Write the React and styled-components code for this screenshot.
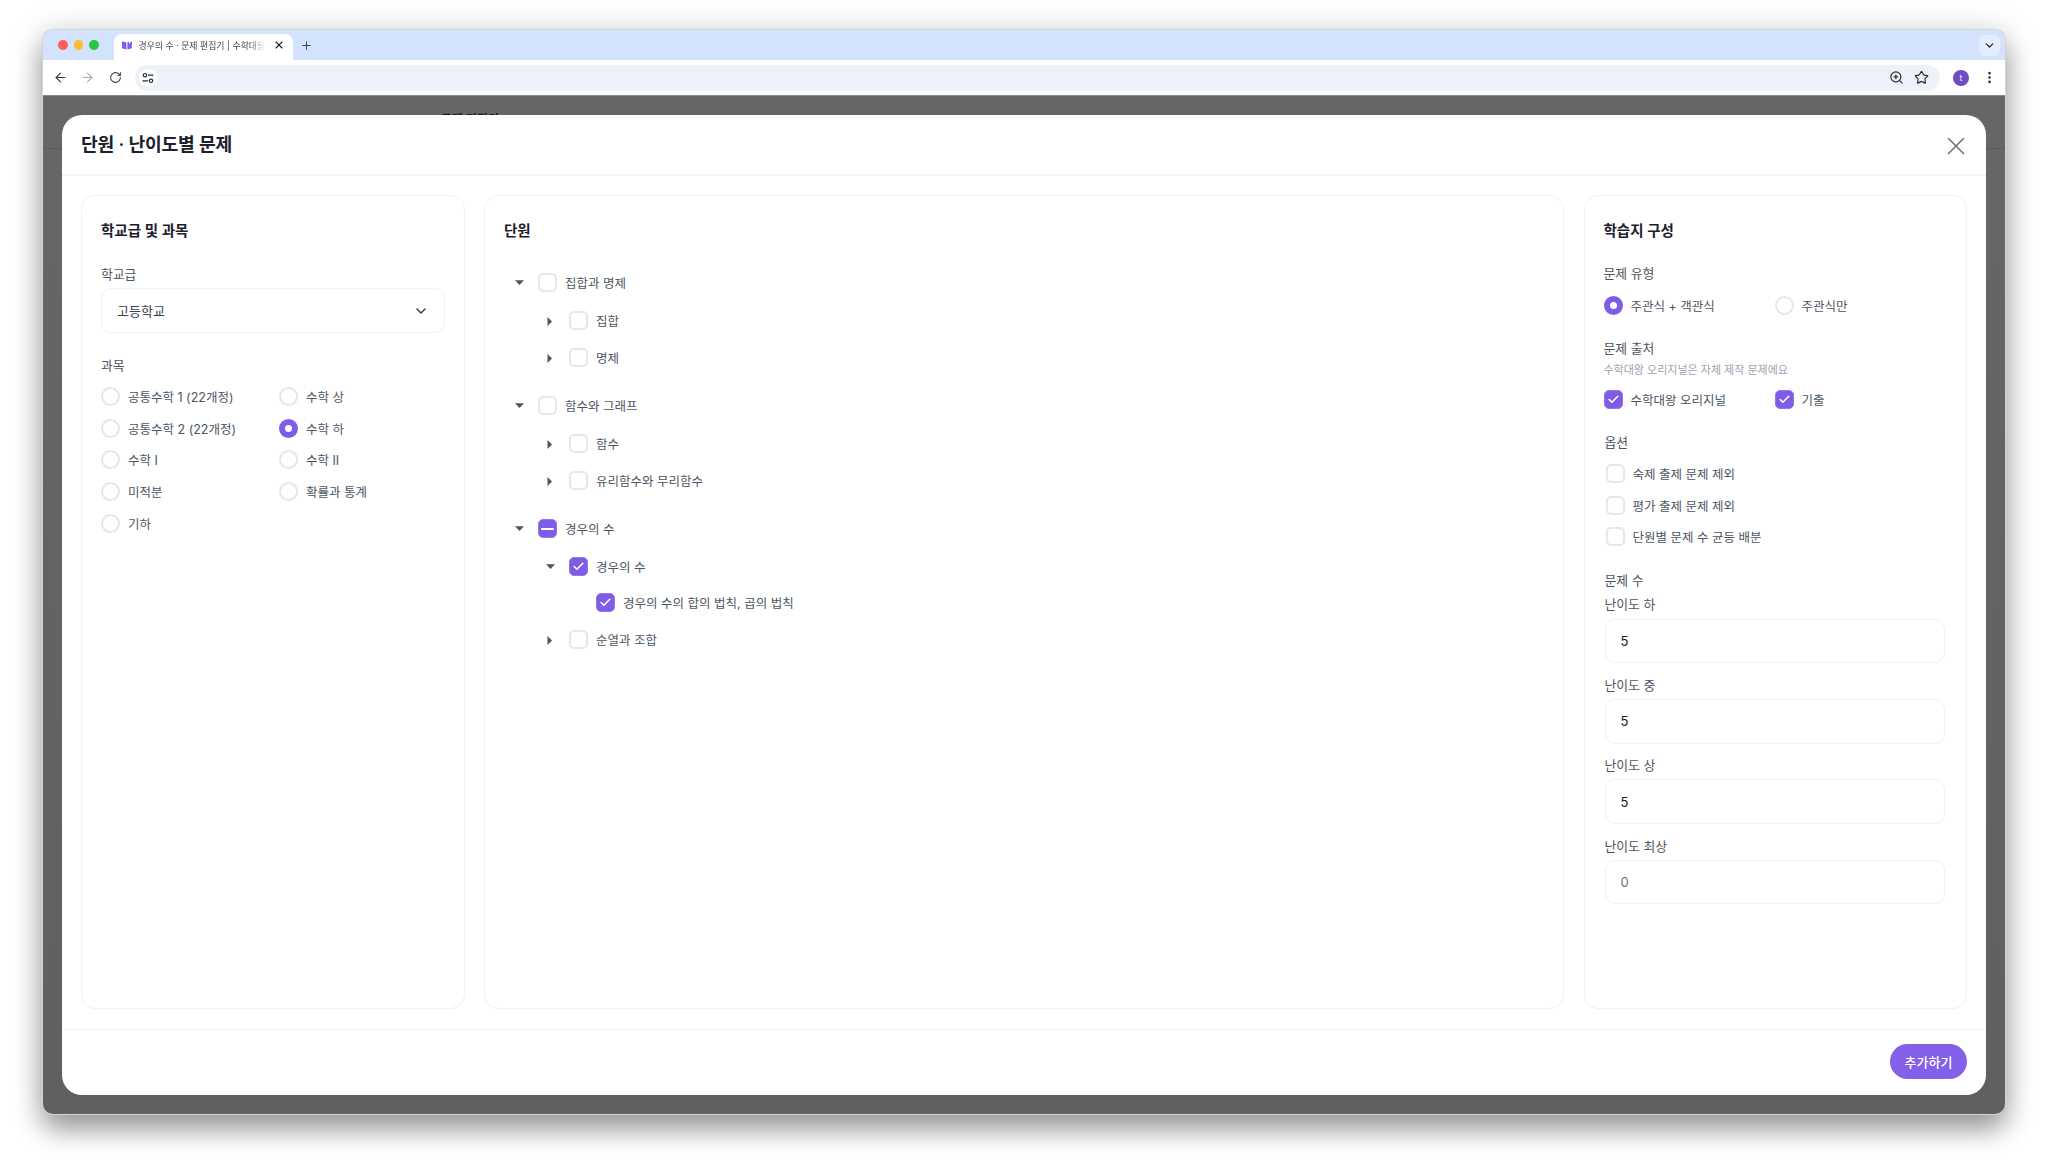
import React from 'react';
import styled, { createGlobalStyle } from 'styled-components';
import { ArrowLeft, ArrowRight, RotateCw, ZoomIn, Star, EllipsisVertical, ChevronDown, X, Plus, Check } from 'lucide-react';

const FONT = 'Inter, "Noto Sans CJK KR", "Noto Sans", sans-serif';
const PURPLE = '#7f5ce6';

const GlobalStyle = createGlobalStyle`
  html, body { margin: 0; padding: 0; background: #fff; }
  * { box-sizing: border-box; }
  body { font-family: ${FONT}; }
`;

const Page = styled.div`
  width: 2048px;
  height: 1171px;
  padding: 30px 43px 57px;
  background: #fff;
  overflow: hidden;
`;

// Browser window
const BrowserWindow = styled.div`
  height: 100%;
  display: flex;
  flex-direction: column;
  border-radius: 10px;
  overflow: hidden;
  box-shadow: 0 0 0 1px #d4d4d6, 0 16px 26px rgba(0, 0, 0, 0.32), 0 4px 34px rgba(0, 0, 0, 0.2);
`;

const TabStrip = styled.div`
  height: 30px;
  flex: none;
  display: flex;
  align-items: flex-end;
  background: #d3e3fd;
  padding-left: 15px;
  padding-right: 5px;
`;

const TrafficLights = styled.div`
  display: flex;
  gap: 6px;
  align-self: center;
  margin-right: 15px;
`;

const Light = styled.span`
  width: 9.5px;
  height: 9.5px;
  border-radius: 50%;
  background: ${props => props.color};
`;

const Tab = styled.div`
  width: 179px;
  height: 26px;
  display: flex;
  align-items: center;
  background: #fff;
  border-radius: 8px 8px 0 0;
  padding: 0 8px 4px;
  gap: 7px;
`;

const TabTitle = styled.span`
  flex: 1;
  overflow: hidden;
  white-space: nowrap;
  font-size: 8.9px;
  color: #45474a;
  -webkit-mask-image: linear-gradient(to right, #000 86%, transparent 100%);
  mask-image: linear-gradient(to right, #000 86%, transparent 100%);
`;

const NewTab = styled.div`
  align-self: center;
  margin-left: 7px;
  display: flex;
  color: #3c4043;
`;

const StripMenu = styled.div`
  margin-left: auto;
  align-self: center;
  width: 21px;
  height: 21px;
  border-radius: 6px;
  background: #e4edfc;
  display: flex;
  align-items: center;
  justify-content: center;
  color: #1f1f1f;
`;

const Toolbar = styled.div`
  height: 36px;
  flex: none;
  display: flex;
  align-items: center;
  background: #fff;
  padding: 0 8px 0 3.5px;
  border-bottom: 1px solid #8a8a8a;
`;

const NavButton = styled.div`
  width: 27.5px;
  display: flex;
  justify-content: center;
  color: ${props => (props.$dim ? '#a8aaad' : '#3c4043')};
`;

const Omnibox = styled.div`
  flex: 1;
  height: 26px;
  margin-left: 5.5px;
  display: flex;
  align-items: center;
  padding: 0 11px 0 4px;
  gap: 10.5px;
  border-radius: 13px;
  background: #edf2fa;
  color: #2b2d30;
`;

const SiteChip = styled.div`
  width: 18px;
  height: 18px;
  border-radius: 50%;
  background: #fff;
  display: flex;
  align-items: center;
  justify-content: center;
  margin-right: auto;
`;

const Avatar = styled.div`
  width: 16px;
  height: 16px;
  margin-left: 13px;
  border-radius: 50%;
  background: #6f4bc4;
  color: #e8e0ff;
  font-size: 9px;
  display: flex;
  align-items: center;
  justify-content: center;
`;

const MenuDots = styled.div`
  margin-left: 12px;
  width: 16px;
  display: flex;
  justify-content: center;
  color: #2b2d30;
`;

// Dimmed page + modal
const Overlay = styled.div`
  position: relative;
  flex: 1;
  min-height: 0;
  display: flex;
  padding: 19px;
  background: linear-gradient(#666, #606060);
`;

const PageRule = styled.div`
  position: absolute;
  left: 0;
  right: 0;
  top: 52px;
  height: 1px;
  background: #5a5a5a;
`;

// page title behind the backdrop, only its top edge shows above the modal
const PageHeading = styled.div`
  position: absolute;
  left: 398px;
  top: 14px;
  font-size: 12px;
  font-weight: 700;
  color: #1a1a1a;
  white-space: nowrap;
`;

const Modal = styled.div`
  position: relative;
  flex: 1;
  display: flex;
  flex-direction: column;
  background: #fff;
  border-radius: 20px;
  overflow: hidden;
`;

const ModalHeader = styled.div`
  height: 61px;
  flex: none;
  display: flex;
  align-items: center;
  justify-content: space-between;
  padding: 0 15px 3px 19px;
  border-bottom: 2px solid #f3f4f6;
`;

const ModalTitle = styled.h2`
  margin: 0;
  font-size: 18.2px;
  font-weight: 600;
  color: #1a202c;
  letter-spacing: -0.2px;
`;

const CloseButton = styled.div`
  display: flex;
  margin-top: 5px;
  color: #6b7280;
`;

const ModalBody = styled.div`
  flex: 1;
  min-height: 0;
  display: grid;
  grid-template-columns: 383.5px 1fr 383px;
  gap: 19.5px;
  padding: 18.5px 19.5px 20px 19px;
`;

const ModalFooter = styled.div`
  height: 66px;
  flex: none;
  display: flex;
  align-items: flex-start;
  justify-content: flex-end;
  padding: 14px 19px 0 0;
  border-top: 1px solid #eeeef6;
`;

const PrimaryButton = styled.div`
  width: 77px;
  height: 35px;
  border-radius: 18px;
  background: #8460e8;
  color: #fff;
  font-size: 13px;
  font-weight: 500;
  display: flex;
  align-items: center;
  justify-content: center;
`;

const Panel = styled.section`
  border: 1px solid #f1f1f5;
  border-radius: 14px;
  padding: 25.5px 19px 0;
`;

const PanelTitle = styled.h3`
  margin: 0 0 24px;
  height: 20px;
  line-height: 20px;
  font-size: 14.5px;
  font-weight: 600;
  color: #1a202c;
`;

const Label = styled.div`
  height: 18px;
  line-height: 20px;
  font-size: 12.8px;
  color: #4b5563;
  margin-top: ${props => props.$top || 0}px;
  margin-bottom: ${props => props.$bottom || 0}px;
`;

const Hint = styled.div`
  height: 14px;
  line-height: 14px;
  margin-top: 6px;
  font-size: 11px;
  color: #9ca3af;
`;

const SelectBox = styled.div`
  height: 45px;
  display: flex;
  align-items: center;
  justify-content: space-between;
  padding: 0 15px;
  border: 1.5px solid #f0f0f5;
  border-radius: 10px;
  font-size: 13px;
  color: #374151;
`;

const RadioGrid = styled.div`
  display: grid;
  grid-template-columns: 178px 1fr;
  grid-auto-rows: 31.6px;
  margin-top: 7px;
`;

const Choice = styled.label`
  display: flex;
  align-items: center;
  gap: 8px;
  font-size: 12.5px;
  color: #4b5563;
  white-space: nowrap;
`;

const RadioMark = styled.span`
  width: 19px;
  height: 19px;
  flex: none;
  border-radius: 50%;
  background: #fff;
  border: ${props => (props.$on ? `6px solid ${PURPLE}` : '2px solid #e6e6ef')};
`;

const CheckMark = styled.span`
  width: 19px;
  height: 19px;
  flex: none;
  border-radius: 5px;
  display: flex;
  align-items: center;
  justify-content: center;
  color: #fff;
  background: ${props => (props.$state ? PURPLE : '#fff')};
  border: ${props => (props.$state ? '1px solid #9277ec' : '2px solid #e6e6ef')};
`;

const Dash = styled.span`
  width: 13px;
  height: 2px;
  background: #fff;
  border-radius: 1px;
`;

const Box = ({ state }) => (
  <CheckMark $state={state}>
    {state === 'checked' && <Check size={13} strokeWidth={3} />}
    {state === 'mixed' && <Dash />}
  </CheckMark>
);

// Unit tree
const Tree = styled.div`
  display: flex;
  flex-direction: column;
  gap: 10.4px;
  padding-left: 5px;
  margin-top: -1px;
`;

const TreeRow = styled.div`
  display: flex;
  align-items: center;
  height: ${props => (props.$short ? 36 : 37.5)}px;
  padding-left: ${props => props.$level * 31}px;
  gap: 8px;
  font-size: 12.5px;
  color: #4b5563;
`;

const Toggle = styled.span`
  width: 20px;
  margin-right: 1px;
  flex: none;
  display: flex;
  justify-content: center;
`;

const LeafGap = styled.span`
  width: ${props => props.$width}px;
  flex: none;
`;

const Caret = ({ open }) => (
  <svg width="9" height="9" viewBox="0 0 9 9" fill="#4b5563" overflow="visible">
    {open ? <path d="M0 2.2h9L4.5 7z" /> : <path d="M1.5 1 6 5.5 1.5 10z" />}
  </svg>
);

// Worksheet settings
const ChoiceRow = styled.div`
  display: grid;
  grid-template-columns: 171px 1fr;
  height: 24px;
  margin-top: ${props => props.$top || 11}px;
`;

const OptionList = styled.div`
  display: grid;
  grid-auto-rows: 31.6px;
  margin-top: 7px;
  padding-left: 1px;
`;

const Indented = styled.div`
  padding: 0 2px 0 1px;
`;

const NumberInput = styled.input`
  display: block;
  width: 100%;
  height: 44.5px;
  padding: 0 15px;
  border: 1.5px solid #f0f0f5;
  border-radius: 10px;
  outline: none;
  background: #fff;
  font-family: ${FONT};
  font-size: 13px;
  color: #111827;

  &::placeholder {
    color: #6b7280;
    opacity: 1;
  }
`;

const Favicon = () => (
  <svg width="10" height="10" viewBox="0 0 10 10" fill="#7c5ce8">
    <path d="M0 1.2 4.4 2.4V9.4L0 8.2z" />
    <path d="M5.4 2.4 7 1.8V4L9.8.8V8.2L5.4 9.4z" />
  </svg>
);

const TuneIcon = () => (
  <svg width="12" height="12" viewBox="0 0 12 12" fill="none" stroke="#2b2d30" strokeWidth="1.2">
    <circle cx="3" cy="3.2" r="1.7" />
    <path d="M6 3.2h5.5M.5 8.8H6" />
    <circle cx="9" cy="8.8" r="1.7" />
  </svg>
);

const SUBJECTS = [
  ['공통수학 1 (22개정)'], ['수학 상'],
  ['공통수학 2 (22개정)'], ['수학 하', true],
  ['수학 I'], ['수학 II'],
  ['미적분'], ['확률과 통계'],
  ['기하'],
];

const UNITS = [
  { name: '집합과 명제', children: [{ name: '집합' }, { name: '명제' }] },
  { name: '함수와 그래프', children: [{ name: '함수' }, { name: '유리함수와 무리함수' }] },
  {
    name: '경우의 수',
    state: 'mixed',
    children: [
      { name: '경우의 수', state: 'checked', open: true, leaf: { name: '경우의 수의 합의 법칙, 곱의 법칙', state: 'checked' } },
      { name: '순열과 조합' },
    ],
  },
];

const LEVELS = [
  ['난이도 하', '5'],
  ['난이도 중', '5'],
  ['난이도 상', '5'],
  ['난이도 최상', ''],
];

const App = () => (
  <Page>
    <GlobalStyle />
    <BrowserWindow>
      <TabStrip>
        <TrafficLights>
          <Light color="#ff5f57" />
          <Light color="#febc2e" />
          <Light color="#28c840" />
        </TrafficLights>
        <Tab>
          <Favicon />
          <TabTitle>경우의 수 · 문제 편집기 | 수학대왕</TabTitle>
          <X size={12} strokeWidth={2.2} color="#1f1f1f" />
        </Tab>
        <NewTab><Plus size={13} strokeWidth={1.8} /></NewTab>
        <StripMenu><ChevronDown size={13} strokeWidth={2.4} /></StripMenu>
      </TabStrip>
      <Toolbar>
        <NavButton><ArrowLeft size={15} strokeWidth={1.8} /></NavButton>
        <NavButton $dim><ArrowRight size={15} strokeWidth={1.8} /></NavButton>
        <NavButton><RotateCw size={13} strokeWidth={1.9} /></NavButton>
        <Omnibox>
          <SiteChip><TuneIcon /></SiteChip>
          <ZoomIn size={15} strokeWidth={1.9} />
          <Star size={15} strokeWidth={1.9} />
        </Omnibox>
        <Avatar>t</Avatar>
        <MenuDots><EllipsisVertical size={15} strokeWidth={2.2} /></MenuDots>
      </Toolbar>
      <Overlay>
        <PageRule />
        <PageHeading>문제 편집기</PageHeading>
        <Modal>
          <ModalHeader>
            <ModalTitle>단원 · 난이도별 문제</ModalTitle>
            <CloseButton><X size={30} strokeWidth={1.25} /></CloseButton>
          </ModalHeader>
          <ModalBody>
            <Panel>
              <PanelTitle>학교급 및 과목</PanelTitle>
              <Label $bottom={5}>학교급</Label>
              <SelectBox>
                고등학교
                <ChevronDown size={16} strokeWidth={2.2} color="#374151" />
              </SelectBox>
              <Label $top={23}>과목</Label>
              <RadioGrid>
                {SUBJECTS.map(([name, on]) => (
                  <Choice key={name}>
                    <RadioMark $on={on} />
                    {name}
                  </Choice>
                ))}
              </RadioGrid>
            </Panel>

            <Panel>
              <PanelTitle>단원</PanelTitle>
              <Tree>
                {UNITS.map(unit => (
                  <div key={unit.name}>
                    <TreeRow $level={0}>
                      <Toggle><Caret open /></Toggle>
                      <Box state={unit.state} />
                      {unit.name}
                    </TreeRow>
                    {unit.children.map(child => (
                      <React.Fragment key={child.name}>
                        <TreeRow $level={1}>
                          <Toggle><Caret open={child.open} /></Toggle>
                          <Box state={child.state} />
                          {child.name}
                        </TreeRow>
                        {child.leaf && (
                          <TreeRow $level={2} $short>
                            <LeafGap $width={17} />
                            <Box state={child.leaf.state} />
                            {child.leaf.name}
                          </TreeRow>
                        )}
                      </React.Fragment>
                    ))}
                  </div>
                ))}
              </Tree>
            </Panel>

            <Panel>
              <PanelTitle>학습지 구성</PanelTitle>
              <Label $top={-1}>문제 유형</Label>
              <ChoiceRow>
                <Choice><RadioMark $on />주관식 + 객관식</Choice>
                <Choice><RadioMark />주관식만</Choice>
              </ChoiceRow>
              <Label $top={22}>문제 출처</Label>
              <Hint>수학대왕 오리지널은 자체 제작 문제에요</Hint>
              <ChoiceRow $top={10}>
                <Choice><Box state="checked" />수학대왕 오리지널</Choice>
                <Choice><Box state="checked" />기출</Choice>
              </ChoiceRow>
              <Indented>
                <Label $top={22}>옵션</Label>
                <OptionList>
                  <Choice><Box />숙제 출제 문제 제외</Choice>
                  <Choice><Box />평가 출제 문제 제외</Choice>
                  <Choice><Box />단원별 문제 수 균등 배분</Choice>
                </OptionList>
                <Label $top={18}>문제 수</Label>
                {LEVELS.map(([name, value], i) => (
                  <React.Fragment key={name}>
                    <Label $top={i === 0 ? 6 : 12.8} $bottom={i === 0 ? 6 : 5}>{name}</Label>
                    <NumberInput defaultValue={value} placeholder="0" />
                  </React.Fragment>
                ))}
              </Indented>
            </Panel>
          </ModalBody>
          <ModalFooter>
            <PrimaryButton>추가하기</PrimaryButton>
          </ModalFooter>
        </Modal>
      </Overlay>
    </BrowserWindow>
  </Page>
);

export default App;
